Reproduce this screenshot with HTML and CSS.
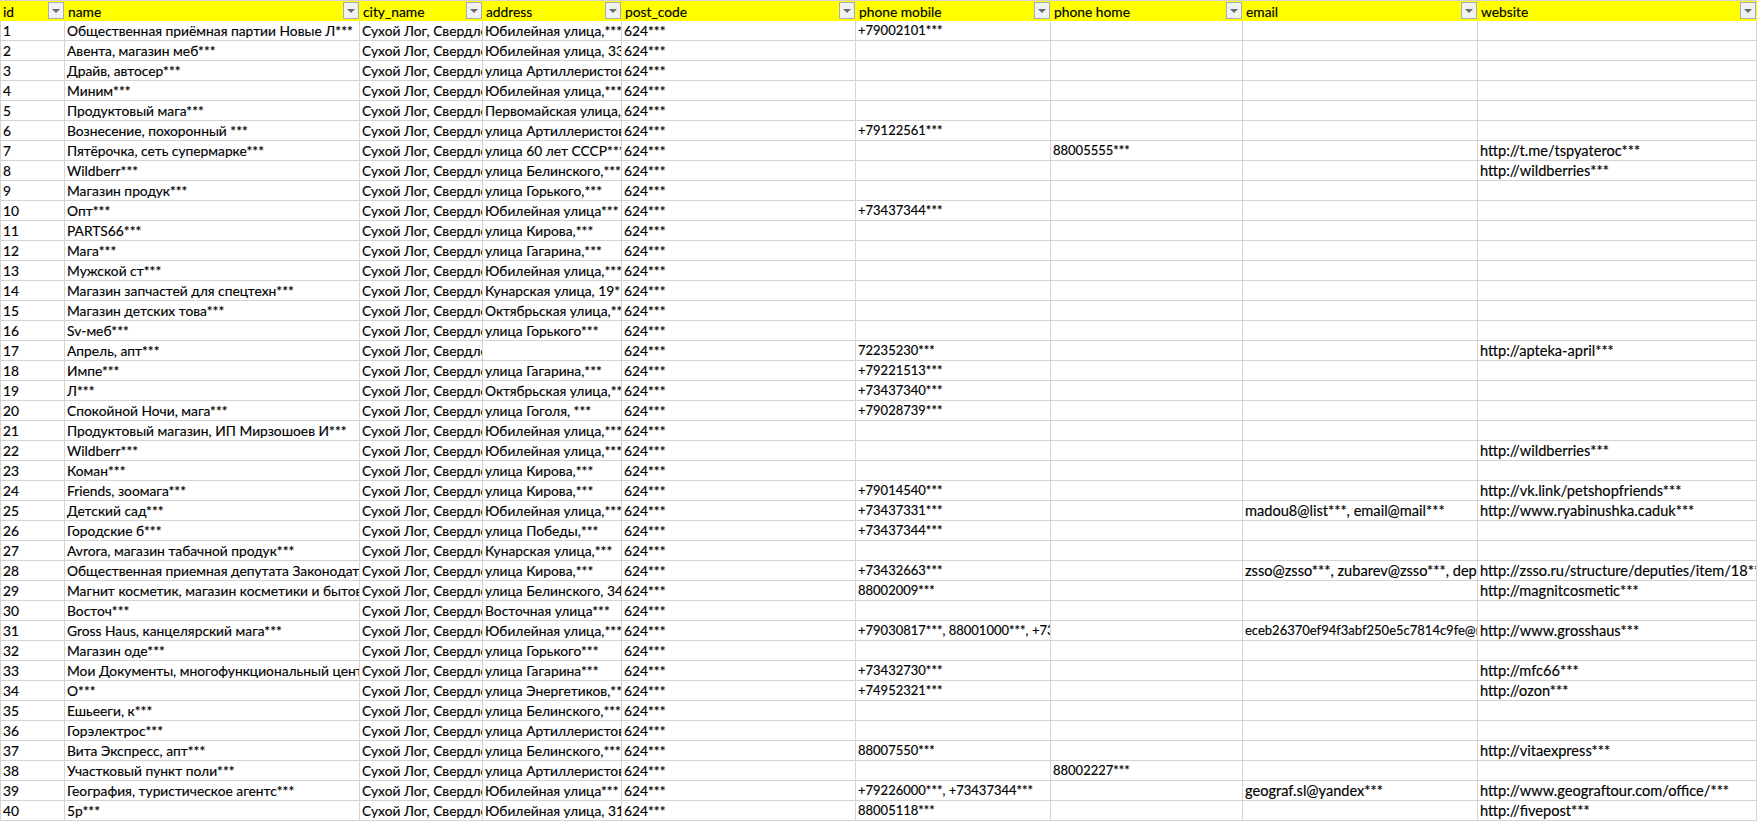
FILE: index.html
```html
<!DOCTYPE html>
<html lang="ru">
<head>
<meta charset="utf-8">
<title>Таблица</title>
<link rel="stylesheet" href="styles.css">
</head>
<body>
<table class="sheet">
<colgroup><col class="c-id"><col class="c-name"><col class="c-city"><col class="c-addr"><col class="c-post"><col class="c-mob"><col class="c-home"><col class="c-mail"><col class="c-web"></colgroup>
<thead>
<tr>
<th><div class="head"><span>id</span><i class="filter"></i></div></th>
<th><div class="head"><span>name</span><i class="filter"></i></div></th>
<th><div class="head"><span>city_name</span><i class="filter"></i></div></th>
<th><div class="head"><span>address</span><i class="filter"></i></div></th>
<th><div class="head"><span>post_code</span><i class="filter"></i></div></th>
<th><div class="head"><span>phone mobile</span><i class="filter"></i></div></th>
<th><div class="head"><span>phone home</span><i class="filter"></i></div></th>
<th><div class="head"><span>email</span><i class="filter"></i></div></th>
<th><div class="head"><span>website</span><i class="filter"></i></div></th>
</tr>
</thead>
<tbody>
<tr><td>1</td><td>Общественная приёмная партии Новые Л***</td><td>Сухой Лог, Свердловская область</td><td>Юбилейная улица,***</td><td>624***</td><td>+79002101***</td><td></td><td></td><td></td></tr>
<tr><td>2</td><td>Авента, магазин меб***</td><td>Сухой Лог, Свердловская область</td><td>Юбилейная улица, 33***</td><td>624***</td><td></td><td></td><td></td><td></td></tr>
<tr><td>3</td><td>Драйв, автосер***</td><td>Сухой Лог, Свердловская область</td><td>улица Артиллеристов,***</td><td>624***</td><td></td><td></td><td></td><td></td></tr>
<tr><td>4</td><td>Миним***</td><td>Сухой Лог, Свердловская область</td><td>Юбилейная улица,***</td><td>624***</td><td></td><td></td><td></td><td></td></tr>
<tr><td>5</td><td>Продуктовый мага***</td><td>Сухой Лог, Свердловская область</td><td>Первомайская улица,***</td><td>624***</td><td></td><td></td><td></td><td></td></tr>
<tr><td>6</td><td>Вознесение, похоронный ***</td><td>Сухой Лог, Свердловская область</td><td>улица Артиллеристов,***</td><td>624***</td><td>+79122561***</td><td></td><td></td><td></td></tr>
<tr><td>7</td><td>Пятёрочка, сеть супермарке***</td><td>Сухой Лог, Свердловская область</td><td>улица 60 лет СССР***</td><td>624***</td><td></td><td>88005555***</td><td></td><td>http://t.me/tspyateroc***</td></tr>
<tr><td>8</td><td>Wildberr***</td><td>Сухой Лог, Свердловская область</td><td>улица Белинского,***</td><td>624***</td><td></td><td></td><td></td><td>http://wildberries***</td></tr>
<tr><td>9</td><td>Магазин продук***</td><td>Сухой Лог, Свердловская область</td><td>улица Горького,***</td><td>624***</td><td></td><td></td><td></td><td></td></tr>
<tr><td>10</td><td>Опт***</td><td>Сухой Лог, Свердловская область</td><td>Юбилейная улица***</td><td>624***</td><td>+73437344***</td><td></td><td></td><td></td></tr>
<tr><td>11</td><td>PARTS66***</td><td>Сухой Лог, Свердловская область</td><td>улица Кирова,***</td><td>624***</td><td></td><td></td><td></td><td></td></tr>
<tr><td>12</td><td>Мага***</td><td>Сухой Лог, Свердловская область</td><td>улица Гагарина,***</td><td>624***</td><td></td><td></td><td></td><td></td></tr>
<tr><td>13</td><td>Мужской ст***</td><td>Сухой Лог, Свердловская область</td><td>Юбилейная улица,***</td><td>624***</td><td></td><td></td><td></td><td></td></tr>
<tr><td>14</td><td>Магазин запчастей для спецтехн***</td><td>Сухой Лог, Свердловская область</td><td>Кунарская улица, 19***</td><td>624***</td><td></td><td></td><td></td><td></td></tr>
<tr><td>15</td><td>Магазин детских това***</td><td>Сухой Лог, Свердловская область</td><td>Октябрьская улица,***</td><td>624***</td><td></td><td></td><td></td><td></td></tr>
<tr><td>16</td><td>Sv-меб***</td><td>Сухой Лог, Свердловская область</td><td>улица Горького***</td><td>624***</td><td></td><td></td><td></td><td></td></tr>
<tr><td>17</td><td>Апрель, апт***</td><td>Сухой Лог, Свердловская область</td><td></td><td>624***</td><td>72235230***</td><td></td><td></td><td>http://apteka-april***</td></tr>
<tr><td>18</td><td>Импе***</td><td>Сухой Лог, Свердловская область</td><td>улица Гагарина,***</td><td>624***</td><td>+79221513***</td><td></td><td></td><td></td></tr>
<tr><td>19</td><td>Л***</td><td>Сухой Лог, Свердловская область</td><td>Октябрьская улица,***</td><td>624***</td><td>+73437340***</td><td></td><td></td><td></td></tr>
<tr><td>20</td><td>Спокойной Ночи, мага***</td><td>Сухой Лог, Свердловская область</td><td>улица Гоголя, ***</td><td>624***</td><td>+79028739***</td><td></td><td></td><td></td></tr>
<tr><td>21</td><td>Продуктовый магазин, ИП Мирзошоев И***</td><td>Сухой Лог, Свердловская область</td><td>Юбилейная улица,***</td><td>624***</td><td></td><td></td><td></td><td></td></tr>
<tr><td>22</td><td>Wildberr***</td><td>Сухой Лог, Свердловская область</td><td>Юбилейная улица,***</td><td>624***</td><td></td><td></td><td></td><td>http://wildberries***</td></tr>
<tr><td>23</td><td>Коман***</td><td>Сухой Лог, Свердловская область</td><td>улица Кирова,***</td><td>624***</td><td></td><td></td><td></td><td></td></tr>
<tr><td>24</td><td>Friends, зоомага***</td><td>Сухой Лог, Свердловская область</td><td>улица Кирова,***</td><td>624***</td><td>+79014540***</td><td></td><td></td><td>http://vk.link/petshopfriends***</td></tr>
<tr><td>25</td><td>Детский сад***</td><td>Сухой Лог, Свердловская область</td><td>Юбилейная улица,***</td><td>624***</td><td>+73437331***</td><td></td><td>madou8@list***, email@mail***</td><td>http://www.ryabinushka.caduk***</td></tr>
<tr><td>26</td><td>Городские б***</td><td>Сухой Лог, Свердловская область</td><td>улица Победы,***</td><td>624***</td><td>+73437344***</td><td></td><td></td><td></td></tr>
<tr><td>27</td><td>Avrora, магазин табачной продук***</td><td>Сухой Лог, Свердловская область</td><td>Кунарская улица,***</td><td>624***</td><td></td><td></td><td></td><td></td></tr>
<tr><td>28</td><td>Общественная приемная депутата Законодательного собрания</td><td>Сухой Лог, Свердловская область</td><td>улица Кирова,***</td><td>624***</td><td>+73432663***</td><td></td><td>zsso@zsso***, zubarev@zsso***, deputat@zsso***</td><td>http://zsso.ru/structure/deputies/item/18***</td></tr>
<tr><td>29</td><td>Магнит косметик, магазин косметики и бытовой химии***</td><td>Сухой Лог, Свердловская область</td><td>улица Белинского, 34***</td><td>624***</td><td>88002009***</td><td></td><td></td><td>http://magnitcosmetic***</td></tr>
<tr><td>30</td><td>Восточ***</td><td>Сухой Лог, Свердловская область</td><td>Восточная улица***</td><td>624***</td><td></td><td></td><td></td><td></td></tr>
<tr><td>31</td><td>Gross Haus, канцелярский мага***</td><td>Сухой Лог, Свердловская область</td><td>Юбилейная улица,***</td><td>624***</td><td>+79030817***, 88001000***, +73437344***</td><td></td><td class="hash">eceb26370ef94f3abf250e5c7814c9fe@mail***</td><td>http://www.grosshaus***</td></tr>
<tr><td>32</td><td>Магазин оде***</td><td>Сухой Лог, Свердловская область</td><td>улица Горького***</td><td>624***</td><td></td><td></td><td></td><td></td></tr>
<tr><td>33</td><td>Мои Документы, многофункциональный центр***</td><td>Сухой Лог, Свердловская область</td><td>улица Гагарина***</td><td>624***</td><td>+73432730***</td><td></td><td></td><td>http://mfc66***</td></tr>
<tr><td>34</td><td>О***</td><td>Сухой Лог, Свердловская область</td><td>улица Энергетиков,***</td><td>624***</td><td>+74952321***</td><td></td><td></td><td>http://ozon***</td></tr>
<tr><td>35</td><td>Ешьееги, к***</td><td>Сухой Лог, Свердловская область</td><td>улица Белинского,***</td><td>624***</td><td></td><td></td><td></td><td></td></tr>
<tr><td>36</td><td>Горэлектрос***</td><td>Сухой Лог, Свердловская область</td><td>улица Артиллеристов,***</td><td>624***</td><td></td><td></td><td></td><td></td></tr>
<tr><td>37</td><td>Вита Экспресс, апт***</td><td>Сухой Лог, Свердловская область</td><td>улица Белинского,***</td><td>624***</td><td>88007550***</td><td></td><td></td><td>http://vitaexpress***</td></tr>
<tr><td>38</td><td>Участковый пункт поли***</td><td>Сухой Лог, Свердловская область</td><td>улица Артиллеристов,***</td><td>624***</td><td></td><td>88002227***</td><td></td><td></td></tr>
<tr><td>39</td><td>География, туристическое агентс***</td><td>Сухой Лог, Свердловская область</td><td>Юбилейная улица***</td><td>624***</td><td>+79226000***, +73437344***</td><td></td><td>geograf.sl@yandex***</td><td>http://www.geograftour.com/office/***</td></tr>
<tr><td>40</td><td>5р***</td><td>Сухой Лог, Свердловская область</td><td>Юбилейная улица, 31***</td><td>624***</td><td>88005118***</td><td></td><td></td><td>http://fivepost***</td></tr>
</tbody>
</table>
</body>
</html>
```
FILE: styles.css
```css
html, body {
  margin: 0;
  padding: 0;
  background: #fff;
  overflow: hidden;
}

.sheet {
  table-layout: fixed;
  width: 1757px;
  border-collapse: separate;
  border-spacing: 0;
  font-family: "Lato", "Liberation Sans", sans-serif;
  font-size: 13.8px;
  color: #000;
  -webkit-text-stroke: 0.15px #000;
}

.c-id { width: 65px; }
.c-name { width: 295px; }
.c-city { width: 123px; }
.c-addr { width: 139px; }
.c-post { width: 234px; }
.c-mob { width: 195px; }
.c-home { width: 192px; }
.c-mail { width: 235px; }
.c-web { width: 279px; }

.sheet th {
  height: 20px;
  padding: 0;
  border-top: 1px solid #d4d4d4;
  background: #ff0;
  font-weight: 400;
  text-align: left;
}

.head {
  display: flex;
  align-items: center;
  justify-content: space-between;
  height: 20px;
  padding-left: 2px;
  white-space: nowrap;
}

.head span {
  padding-left: 1px;
}

.filter {
  display: flex;
  align-items: center;
  justify-content: center;
  box-sizing: border-box;
  width: 16px;
  height: 17px;
  margin: 0 1px 1px 0;
  border: 1px solid #a7abb5;
  background: #f0f1f3;
}

.filter::after {
  content: "";
  width: 0;
  height: 0;
  margin-top: 1px;
  border-left: 4px solid transparent;
  border-right: 4px solid transparent;
  border-top: 4px solid #6a6a6a;
}

.sheet td {
  height: 19px;
  padding: 0 0 0 2px;
  border-right: 1px solid #d4d4d4;
  border-bottom: 1px solid #d4d4d4;
  line-height: 19px;
  white-space: nowrap;
  overflow: hidden;
  vertical-align: middle;
}

.sheet td:first-child {
  border-left: 1px solid #d4d4d4;
}

/* Digit-heavy columns: Lato's figures run wider than the reference's. */
.sheet td:nth-child(6),
.sheet td:nth-child(7),
.sheet td.hash {
  font-size: 13px;
}

/* Latin text runs narrower than the Cyrillic at the same size. */
.sheet td:nth-child(8):not(.hash),
.sheet td:nth-child(9) {
  font-size: 14.6px;
}
```
